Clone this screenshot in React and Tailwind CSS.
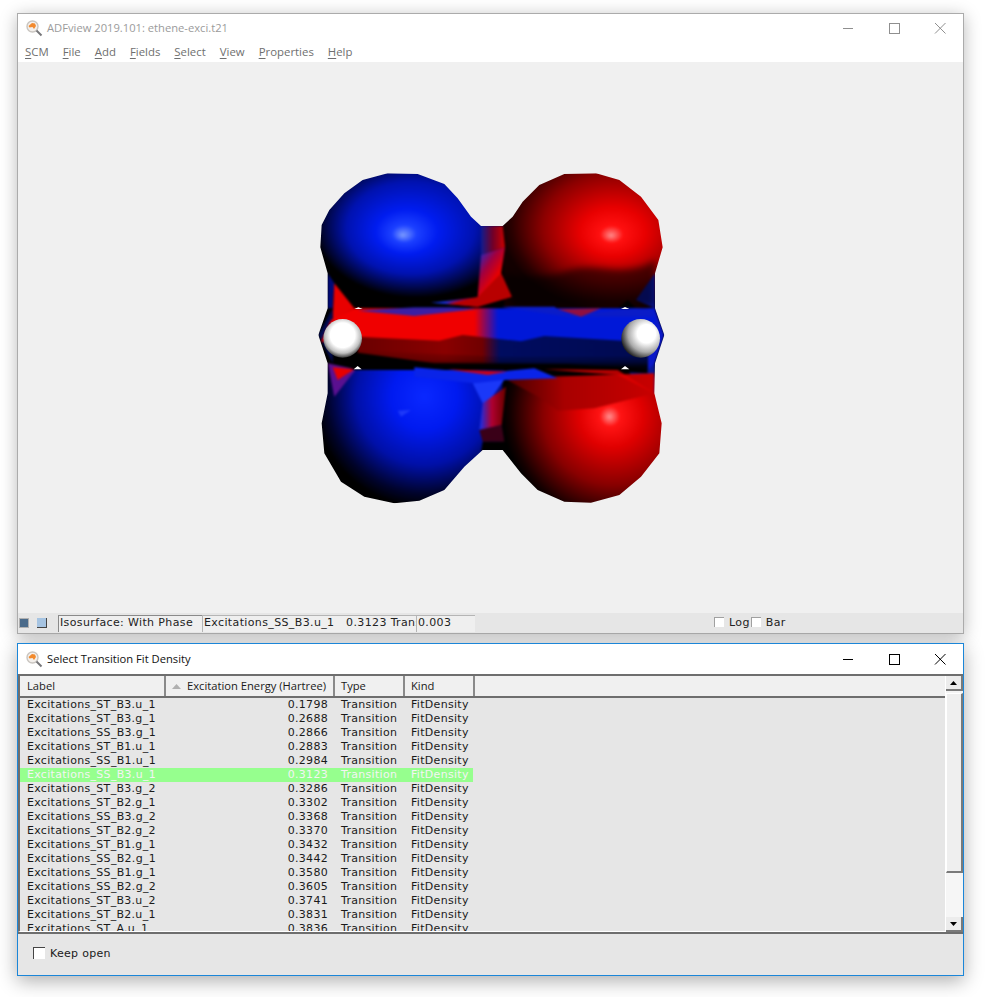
const rows = [
  ["Excitations_ST_B3.u_1", "0.1798"],
  ["Excitations_ST_B3.g_1", "0.2688"],
  ["Excitations_SS_B3.g_1", "0.2866"],
  ["Excitations_ST_B1.u_1", "0.2883"],
  ["Excitations_SS_B1.u_1", "0.2984"],
  ["Excitations_SS_B3.u_1", "0.3123"],
  ["Excitations_ST_B3.g_2", "0.3286"],
  ["Excitations_ST_B2.g_1", "0.3302"],
  ["Excitations_SS_B3.g_2", "0.3368"],
  ["Excitations_ST_B2.g_2", "0.3370"],
  ["Excitations_ST_B1.g_1", "0.3432"],
  ["Excitations_SS_B2.g_1", "0.3442"],
  ["Excitations_SS_B1.g_1", "0.3580"],
  ["Excitations_SS_B2.g_2", "0.3605"],
  ["Excitations_ST_B3.u_2", "0.3741"],
  ["Excitations_ST_B2.u_1", "0.3831"],
  ["Excitations_ST_A.u_1", "0.3836"],
];

function AppIcon() {
  return (
    <svg width="17" height="17" viewBox="0 0 17 17" className="shrink-0">
      <circle cx="6.5" cy="6.5" r="5.5" fill="#f4f0ec" stroke="#c9c5c0" strokeWidth="1.4" />
      <path d="M2.5 6 L6 3 L9 3.5 L10 6 L8 9 L6.5 7 L3.5 7.5 Z" fill="#f28a2e" />
      <path d="M10.5 10.5 L15.5 15.5" stroke="#77777a" strokeWidth="2" />
    </svg>
  );
}

function WinControls({ color }) {
  return (
    <div className="flex items-center">
      <svg width="46" height="14" viewBox="0 0 46 14"><path d="M18 7.5H28" stroke={color} strokeWidth="1" /></svg>
      <svg width="46" height="14" viewBox="0 0 46 14"><rect x="18.5" y="2.5" width="10" height="10" fill="none" stroke={color} strokeWidth="1" /></svg>
      <svg width="46" height="14" viewBox="0 0 46 14"><path d="M18 2L28.5 12.5M28.5 2L18 12.5" stroke={color} strokeWidth="1" /></svg>
    </div>
  );
}

function Menu({ k, rest }) {
  return <span className="whitespace-nowrap"><span className="underline underline-offset-2">{k}</span>{rest}</span>;
}

function Molecule() {
  return (
    <svg width="380" height="360" viewBox="0 0 1140 1080">
      <defs>
        <radialGradient id="tl" gradientUnits="userSpaceOnUse" cx="345" cy="190" r="310" fx="305" fy="240" gradientTransform="translate(0 53) scale(1 0.72)">
          <stop offset="0" stopColor="#7a9aff" />
          <stop offset="0.12" stopColor="#1c40ff" />
          <stop offset="0.3" stopColor="#001cf0" />
          <stop offset="0.62" stopColor="#0012b0" />
          <stop offset="0.9" stopColor="#000430" />
          <stop offset="1" stopColor="#000" />
        </radialGradient>
        <radialGradient id="tr" gradientUnits="userSpaceOnUse" cx="950" cy="190" r="350" fx="930" fy="240" gradientTransform="translate(0 47) scale(1 0.75)">
          <stop offset="0" stopColor="#ff8a8a" />
          <stop offset="0.1" stopColor="#ff1010" />
          <stop offset="0.28" stopColor="#e80000" />
          <stop offset="0.62" stopColor="#8c0000" />
          <stop offset="0.9" stopColor="#2a0000" />
          <stop offset="1" stopColor="#120000" />
        </radialGradient>
        <radialGradient id="bl" gradientUnits="userSpaceOnUse" cx="370" cy="710" r="330">
          <stop offset="0" stopColor="#0a28ff" />
          <stop offset="0.3" stopColor="#001af0" />
          <stop offset="0.62" stopColor="#0010a8" />
          <stop offset="0.88" stopColor="#00032c" />
          <stop offset="1" stopColor="#000" />
        </radialGradient>
        <radialGradient id="br" gradientUnits="userSpaceOnUse" cx="945" cy="760" r="340" fx="925" fy="770">
          <stop offset="0" stopColor="#ff9090" />
          <stop offset="0.09" stopColor="#ff1414" />
          <stop offset="0.28" stopColor="#e00000" />
          <stop offset="0.62" stopColor="#880000" />
          <stop offset="0.92" stopColor="#150000" />
          <stop offset="1" stopColor="#000" />
        </radialGradient>
        <linearGradient id="brTop" gradientUnits="userSpaceOnUse" x1="610" y1="0" x2="1060" y2="0">
          <stop offset="0" stopColor="#400000" />
          <stop offset="0.4" stopColor="#a80000" />
          <stop offset="1" stopColor="#c80000" />
        </linearGradient>
        <linearGradient id="bandTop" x1="0" x2="1" y1="0" y2="0">
          <stop offset="0" stopColor="#f00000" />
          <stop offset="0.46" stopColor="#f00000" />
          <stop offset="0.53" stopColor="#0018d8" />
          <stop offset="1" stopColor="#0018d8" />
        </linearGradient>
        <linearGradient id="bandLow" x1="0" y1="0" x2="1" y2="0">
          <stop offset="0" stopColor="#6a0000" />
          <stop offset="0.3" stopColor="#8a0000" />
          <stop offset="0.43" stopColor="#700000" />
          <stop offset="0.49" stopColor="#000c60" />
          <stop offset="1" stopColor="#000a50" />
        </linearGradient>
        <linearGradient id="shade" x1="0" y1="0" x2="0" y2="1">
          <stop offset="0" stopColor="#000" stopOpacity="0" />
          <stop offset="0.6" stopColor="#000" stopOpacity="0.25" />
          <stop offset="1" stopColor="#000" stopOpacity="1" />
        </linearGradient>
        <linearGradient id="neckTop" gradientUnits="userSpaceOnUse" x1="540" y1="0" x2="610" y2="0">
          <stop offset="0" stopColor="#101c90" />
          <stop offset="0.5" stopColor="#700028" />
          <stop offset="1" stopColor="#c80000" />
        </linearGradient>
        <linearGradient id="neckMid" gradientUnits="userSpaceOnUse" x1="525" y1="280" x2="600" y2="330">
          <stop offset="0" stopColor="#1030d8" />
          <stop offset="0.55" stopColor="#a00040" />
          <stop offset="1" stopColor="#e80000" />
        </linearGradient>
        <linearGradient id="neckLow" gradientUnits="userSpaceOnUse" x1="535" y1="0" x2="610" y2="0">
          <stop offset="0" stopColor="#1030f0" />
          <stop offset="0.5" stopColor="#b00030" />
          <stop offset="1" stopColor="#700000" />
        </linearGradient>
        <radialGradient id="sL" cx="0.5" cy="0.42" r="0.58">
          <stop offset="0" stopColor="#fff" />
          <stop offset="0.55" stopColor="#fff" />
          <stop offset="0.8" stopColor="#c0c0c0" />
          <stop offset="1" stopColor="#3a3a3a" />
        </radialGradient>
        <radialGradient id="sR" cx="0.65" cy="0.38" r="0.68">
          <stop offset="0" stopColor="#fff" />
          <stop offset="0.35" stopColor="#fff" />
          <stop offset="0.7" stopColor="#aaa" />
          <stop offset="1" stopColor="#222" />
        </radialGradient>
        <filter id="soft" colorInterpolationFilters="sRGB"><feGaussianBlur stdDeviation="9" /></filter>
        <filter id="fine" x="0" y="0" width="1" height="1" colorInterpolationFilters="sRGB"><feGaussianBlur stdDeviation="2.5" /></filter>
        <clipPath id="all">
          <path d="M58 262L62 195L85 150L130 100L185 60L260 40L350 42L430 72L470 115L510 170L540 198H605L635 170L665 125L715 75L790 42L885 40L955 60L1020 110L1072 180L1085 262L1062 340V445L1090 525L1062 610L1060 700L1082 790L1075 880L1020 950L955 1005L870 1028L790 1025L710 990L660 940L605 870H545L490 920L430 990L355 1022L280 1030L190 1010L120 965L70 880L62 790L80 700V610L52 525L80 445V340Z" />
        </clipPath>
      </defs>
      <g clipPath="url(#all)">
        <g filter="url(#fine)">
          <rect width="1140" height="1080" fill="#000" />
          {/* lobes */}
          <rect x="0" y="0" width="620" height="450" fill="url(#tl)" />
          <path d="M600 0H1140V450H610Z" fill="url(#tr)" />
          <rect x="0" y="625" width="610" height="455" fill="url(#bl)" />
          <path d="M605 650H1140V1080H610L600 800Z" fill="url(#br)" />
          {/* side webs */}
          <path d="M80 340L100 370L95 445L80 445Z" fill="#000a78" />
          <path d="M100 370L160 445L95 480Z" fill="#e80000" />
          <path d="M52 525L95 445V610Z" fill="#000a50" />
          <path d="M80 610L165 628L100 710Z" fill="#5a1090" />
          <path d="M95 622L160 628L110 660Z" fill="#e80000" />
          <path d="M1062 340V445L1005 420Z" fill="#0a18b0" />
          <path d="M1062 445L1090 525L1062 610L1040 640L1040 445Z" fill="#0a18c8" />
          <path d="M1040 630L1062 610V700L975 630Z" fill="#0a1898" />
          {/* undersides */}
          <path d="M780 340Q830 315 900 325Q1010 340 1062 300V440H640L600 340Q700 360 780 340Z" fill="#000" opacity="0.55" filter="url(#soft)" />
          <path d="M980 420L1005 445H950Z" fill="#000" />
          <path d="M610 655L1060 640V700L880 745L770 752L720 715Z" fill="url(#brTop)" />
          <path d="M290 752L330 750L300 770Z" fill="#3a55ff" opacity="0.5" />
          <path d="M515 670L615 652L560 730L545 730Z" fill="#1a38f8" />
          {/* neck */}
          <path d="M540 198H605L612 262L540 285Z" fill="url(#neckTop)" />
          <path d="M540 285L612 262L600 340L632 410L530 440L390 428L530 412Z" fill="url(#neckMid)" />
          <path d="M530 412L600 340L632 410L530 440L440 432Z" fill="#b80000" />
          <path d="M545 730L615 680L602 795L535 810Z" fill="url(#neckLow)" />
          <path d="M535 810L602 795L610 845H545Z" fill="#3a0018" />
          <path d="M545 845H610L620 875H540Z" fill="#000" />
          {/* band */}
          <path d="M160 445H1062V545H60L90 480Z" fill="url(#bandTop)" />
          <path d="M170 452L340 442H450L530 447L340 468Z" fill="#1c24c0" opacity="0.85" />
          <path d="M600 440H760L800 465L1000 445L1060 450V470L800 470Z" fill="#0a1cc8" />
          <path d="M770 448L900 445L840 470Z" fill="#a01030" opacity="0.9" />
          <path d="M170 530L415 542L485 525L660 544L730 528L965 542L1040 545V625H170Z" fill="url(#bandLow)" />
          <path d="M170 570L600 590H1040V625H170Z" fill="url(#shade)" />
          <path d="M150 575L400 610L800 612L1040 628V640L800 630H160L95 595Z" fill="#000" />
          <path d="M340 622L540 640L700 625L770 655L610 660L520 670L340 650Z" fill="#0a24e8" />
          <path d="M440 628L620 635L560 645Z" fill="#e00000" opacity="0.9" />
          <path d="M730 628L950 630L1060 700L950 645Z" fill="#e00000" opacity="0.8" />
        </g>
        {/* small white specks */}
        <path d="M160 447L185 447L172 442Z M960 447L985 447L972 441Z M158 628L182 628L170 618Z M960 628L985 628L972 618Z" fill="#fff" />
      </g>
      <circle cx="125" cy="535" r="58" fill="url(#sL)" />
      <circle cx="1019" cy="535" r="58" fill="url(#sR)" />
    </svg>
  );
}

const tableFont = "font-['DejaVu_Sans',sans-serif] text-[11px] tracking-[0.3px]";

function HeaderCell({ className, children }) {
  return (
    <div className={"h-[20px] pt-[1px] flex items-center bg-[#f0f0f0] border-r-2 border-[#8a8a8a] font-['Open_Sans',sans-serif] tracking-normal text-[11.2px] " + className}>
      {children}
    </div>
  );
}

export default function App() {
  return (
    <div className="w-[985px] h-[997px] bg-white pt-[13px] pl-[17px] overflow-hidden">
      {/* main window */}
      <div className="w-[947px] h-[621px] flex flex-col bg-white border border-[#ababab] shadow-[0_3px_16px_rgba(0,0,0,0.28)] font-['Open_Sans',sans-serif]">
        <div className="h-[28px] shrink-0 flex items-center pl-[8px] text-[#9b9b9b] text-[11.2px]">
          <AppIcon />
          <span className="ml-[4px] flex-1">ADFview 2019.101: ethene-exci.t21</span>
          <WinControls color="#8f8f8f" />
        </div>
        <div className="h-[20px] shrink-0 flex items-center pl-[7px] gap-[14px] text-[11.4px] text-[#6f6f6f]">
          <Menu k="S" rest="CM" />
          <Menu k="F" rest="ile" />
          <Menu k="A" rest="dd" />
          <Menu k="F" rest="ields" />
          <Menu k="S" rest="elect" />
          <Menu k="V" rest="iew" />
          <Menu k="P" rest="roperties" />
          <Menu k="H" rest="elp" />
        </div>
        <div className="flex-1 bg-[#f0f0f0] flex items-center justify-center">
          <div className="mt-[4px]"><Molecule /></div>
        </div>
        <div className="h-[20px] shrink-0 bg-[#e6e6e6] flex items-center text-[11px] tracking-[0.37px] font-['DejaVu_Sans',sans-serif] text-[#222]">
          <div className="w-[10px] h-[10px] ml-[1px] bg-[#4a6a8a] border border-[#b0b0b0] shrink-0" />
          <div className="w-[10px] h-[10px] ml-[8px] bg-[#a6c4e2] border-r border-b border-[#444] shrink-0" />
          <div className="ml-[11px] w-[144px] h-[17px] px-[1px] flex items-center bg-[#efefef] border-t border-l border-[#8a8a8a] whitespace-nowrap overflow-hidden shrink-0">Isosurface: With Phase</div>
          <div className="w-[214px] h-[17px] px-[1px] flex items-center bg-[#efefef] border-t border-l border-[#b5b5b5] whitespace-nowrap overflow-hidden shrink-0">Excitations_SS_B3.u_1&nbsp;&nbsp;&nbsp;0.3123 Transition FitDensity</div>
          <div className="w-[59px] h-[17px] px-[1px] flex items-center bg-[#efefef] border-t border-l border-[#b5b5b5] shrink-0">0.003</div>
          <label className="ml-[239px] flex items-center">
            <span className="w-[10px] h-[10px] bg-white border-t border-l border-[#a0a0a0] mt-[-3px]" />
            <span className="ml-[5px]">Log</span>
          </label>
          <label className="ml-[1px] flex items-center">
            <span className="w-[10px] h-[10px] bg-white border-t border-l border-[#a0a0a0] mt-[-3px]" />
            <span className="ml-[5px]">Bar</span>
          </label>
        </div>
      </div>

      {/* dialog */}
      <div className="mt-[9px] w-[947px] h-[333px] flex flex-col bg-white border border-[#1b86d8] shadow-[0_5px_18px_rgba(0,0,0,0.32)] font-['Open_Sans',sans-serif]">
        <div className="h-[30px] shrink-0 flex items-center pl-[8px] text-[#111] text-[11.2px]">
          <AppIcon />
          <span className="ml-[4px] flex-1">Select Transition Fit Density</span>
          <WinControls color="#000" />
        </div>
        <div className="flex h-[260px] shrink-0 bg-[#e6e6e6] border-t-2 border-b-2 border-[#6e6e6e]">
          <div className={"flex-1 flex flex-col min-w-0 border-l-2 border-[#6e6e6e] border-r border-r-white border-b border-b-white text-[#1a1a1a] " + tableFont}>
            <div className="flex shrink-0 border-b-2 border-[#6e6e6e]">
              <HeaderCell className="w-[146px] pl-[7px]">Label</HeaderCell>
              <HeaderCell className="w-[169px] pl-[6px]">
                <svg width="9" height="5" viewBox="0 0 9 5" className="shrink-0 mr-[6px]"><path d="M0 5L4.5 0L9 5Z" fill="#b0b0b0" /></svg>
                <span className="whitespace-nowrap">Excitation Energy (Hartree)</span>
              </HeaderCell>
              <HeaderCell className="w-[70px] pl-[6px]">Type</HeaderCell>
              <HeaderCell className="w-[70px] pl-[6px]">Kind</HeaderCell>
              <div className="flex-1 bg-[#f0f0f0] h-[20px]" />
            </div>
            <div className="flex-1 overflow-hidden">
              {rows.map(([label, value], i) => (
                <div key={label} className={"flex h-[14px] leading-[14px] w-[453px] whitespace-nowrap " + (i === 5 ? "bg-[#96ff8e] text-[#f4f4f4]" : "")}>
                  <div className="w-[146px] pl-[7px]">{label}</div>
                  <div className="w-[169px] pr-[7px] text-right">{value}</div>
                  <div className="w-[70px] pl-[6px]">Transition</div>
                  <div className="w-[68px] pl-[6px]">FitDensity</div>
                </div>
              ))}
            </div>
          </div>
          {/* scrollbar */}
          <div className="w-[17px] shrink-0 flex flex-col bg-[#f4f4f4]">
            <div className="h-[15px] shrink-0 bg-[#ececec] border-r-2 border-b-2 border-[#7a7a7a] flex items-center justify-center">
              <svg width="7" height="4" viewBox="0 0 7 4"><path d="M0 4L3.5 0L7 4Z" fill="#000" /></svg>
            </div>
            <div className="h-[180px] mt-[2px] shrink-0 bg-[#efefef] border-l border-t border-white border-r-2 border-r-[#7a7a7a] border-b-2 border-b-[#7a7a7a]" />
            <div className="flex-1 bg-[#f6f6f6]" />
            <div className="h-[15px] shrink-0 bg-[#ececec] border-r-2 border-b-2 border-[#7a7a7a] flex items-center justify-center">
              <svg width="7" height="4" viewBox="0 0 7 4"><path d="M0 0L7 0L3.5 4Z" fill="#000" /></svg>
            </div>
          </div>
        </div>
        <div className="flex-1 bg-[#e6e6e6] flex items-center pl-[15px] text-[11px] tracking-[0.3px] text-[#1a1a1a] font-['DejaVu_Sans',sans-serif]">
          <span className="w-[12px] h-[12px] bg-white border-t border-l border-[#444] mt-[-3px]" />
          <span className="ml-[5px]">Keep open</span>
        </div>
      </div>
    </div>
  );
}
